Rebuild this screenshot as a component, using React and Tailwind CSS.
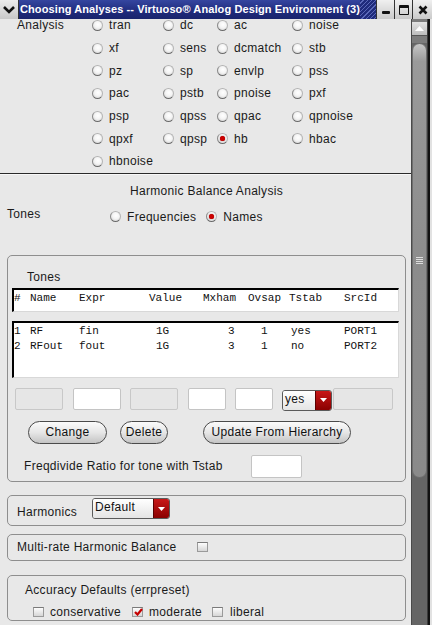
import React from 'react';

const sans = "font-['Liberation_Sans',Arial,sans-serif]";

function Radio({ on }) {
  return (
    <span className="inline-flex w-[11px] h-[11px] shrink-0 items-center justify-center rounded-full border border-[#b4b4b4] border-b-[#6a6a6a] border-l-[#8a8a8a] bg-[radial-gradient(circle_at_55%_40%,#ffffff_0%,#f4f4f4_45%,#c9c9c9_100%)]">
      {on && <span className="w-[5px] h-[5px] rounded-full bg-[#cc0000] shadow-[0_0_1px_#600]" />}
    </span>
  );
}

function Check({ on }) {
  return (
    <span className="relative inline-flex w-[11px] h-[10px] shrink-0 border border-[#9a9a9a] border-t-[#7a7a7a] bg-[linear-gradient(#fdfdfd,#d6d6d6)]">
      {on && (
        <svg className="absolute left-[1px] top-[0px]" width="9" height="8" viewBox="0 0 9 8">
          <path d="M1 4 L3.5 6.5 L8 1" stroke="#c40000" strokeWidth="2.2" fill="none" />
        </svg>
      )}
    </span>
  );
}

function Combo({ label, w, className = '' }) {
  return (
    <div className={`flex h-[21px] rounded-[3px] border border-[#5a5a5a] overflow-hidden ${className}`} style={{ width: w }}>
      <div className="flex-1 bg-[linear-gradient(#ffffff,#e4e4e4)] pl-[2px] text-[12px] leading-[17px] text-[#111]">{label}</div>
      <div className="w-[16px] flex items-center justify-center bg-[linear-gradient(#c81818,#8a0000)] border-l border-[#5a0000]">
        <svg width="7" height="4" viewBox="0 0 7 4"><path d="M0 0 H7 L3.5 4 Z" fill="#fff" /></svg>
      </div>
    </div>
  );
}

function Btn({ children, className = '' }) {
  return (
    <div className={`h-[23px] flex items-center justify-center rounded-full border border-[#4a4a4a] bg-[linear-gradient(#fbfbfb,#e6e6e6_50%,#c4c4c4)] text-[12px] text-[#111] tracking-[0.3px] ${className}`}>
      {children}
    </div>
  );
}

function Field({ white, className = '' }) {
  return (
    <div className={`h-[22px] rounded-[2px] border ${white ? 'bg-white border-[#c4c4c4]' : 'bg-[#e6e6e6] border-[#c8c8c8]'} ${className}`} />
  );
}

const rows = [
  [['tran'], ['dc'], ['ac'], ['noise']],
  [['xf'], ['sens'], ['dcmatch'], ['stb']],
  [['pz'], ['sp'], ['envlp'], ['pss']],
  [['pac'], ['pstb'], ['pnoise'], ['pxf']],
  [['psp'], ['qpss'], ['qpac'], ['qpnoise']],
  [['qpxf'], ['qpsp'], ['hb', true], ['hbac']],
  [['hbnoise']],
];

const colW = ['w-[71px]', 'w-[54px]', 'w-[75px]', 'w-[100px]'];

function TitleBar() {
  return (
    <div className="flex h-[19px] bg-[#1f2b7c]">
      <div className="w-[19px] flex items-center justify-center bg-[linear-gradient(#ececec,#c8c8c8)] border-r border-[#333]">
        <svg width="12" height="8" viewBox="0 0 12 8"><path d="M1 1 L6 6 L11 1" stroke="#111" strokeWidth="2.6" fill="none" /></svg>
      </div>
      <div className="flex-1 flex items-center pl-[1px] bg-[linear-gradient(#3546a0,#1f2b7c_60%,#19246c)] text-white font-bold text-[11px] tracking-[0.1px] whitespace-nowrap overflow-hidden">
        Choosing Analyses -- Virtuoso® Analog Design Environment (3)
      </div>
      <div className="w-[16px] bg-[repeating-linear-gradient(135deg,#1f2b7c_0px,#1f2b7c_2px,#5a68b8_2px,#5a68b8_3px)]" />
      <div className="w-[18px] flex items-end justify-center pb-[5px] bg-[linear-gradient(#f0f0f0,#cacaca)] border-l border-[#333]">
        <div className="w-[8px] h-[3px] bg-[#111] rounded-[1px]" />
      </div>
      <div className="w-[18px] flex items-center justify-center bg-[linear-gradient(#f0f0f0,#cacaca)] border-l border-[#333]">
        <div className="w-[10px] h-[10px] border border-[#111] border-t-[3px] rounded-[1px]" />
      </div>
      <div className="w-[20px] flex items-center justify-center bg-[linear-gradient(#f0f0f0,#cacaca)] border-l border-[#333]">
        <svg width="10" height="10" viewBox="0 0 10 10"><path d="M1.5 1.5 L8.5 8.5 M8.5 1.5 L1.5 8.5" stroke="#111" strokeWidth="2.6" /></svg>
      </div>
    </div>
  );
}

function ScrollBar() {
  return (
    <div className="flex w-[21px] h-[606px]">
      <div className="w-[16px] flex flex-col bg-[#656565] border-l border-[#4a4a4a]">
        <div className="h-[3px] bg-[#7c7c7c]" />
        <div className="h-[14px] flex items-center justify-center bg-[linear-gradient(#e2e2e2,#bdbdbd)] border-b border-[#555]">
          <svg width="9" height="5" viewBox="0 0 9 5"><path d="M0 5 H9 L4.5 0 Z" fill="#fff" /></svg>
        </div>
        <div className="h-[7px] bg-[#7c7c7c]" />
        <div className="h-[435px] flex flex-col items-center justify-center rounded-t-[8px] rounded-b-[8px] border border-[#6e6e6e] bg-[linear-gradient(#c6c6c6,#9a9a9a_4%,#8c8c8c_50%,#8a8a8a)]">
          <div className="flex flex-col gap-[1px]">
            <div className="w-[7px] h-[1px] bg-[#dcdcdc]" />
            <div className="w-[7px] h-[1px] bg-[#dcdcdc]" />
            <div className="w-[7px] h-[1px] bg-[#dcdcdc]" />
            <div className="w-[7px] h-[1px] bg-[#dcdcdc]" />
          </div>
        </div>
      </div>
      <div className="w-[1px] bg-[#3a3a3a]" />
      <div className="w-[2px] bg-[#111]" />
      <div className="w-[2px] bg-[#e2e2e2]" />
    </div>
  );
}

const mono = "font-['Liberation_Mono','Courier_New',monospace] text-[11px] leading-[15px] text-[#111]";
const tcols = 'grid grid-cols-[16px_49px_70px_54px_45px_41px_55px_1fr]';

export default function App() {
  return (
    <div className={`w-[432px] h-[625px] overflow-hidden bg-[#e8e8e8] ${sans} text-[12px] text-[#1a1a1a] tracking-[0.3px]`}>
      <TitleBar />
      <div className="flex h-[606px]">
        <div className="w-[411px] h-[606px] overflow-hidden">
          <div className="mt-[-5px]">
            {rows.map((r, i) => (
              <div key={i} className="flex h-[22.7px] items-center">
                <div className="w-[92px] pl-[17px]">{i === 0 ? 'Analysis' : ''}</div>
                {r.map(([n, on], j) => (
                  <div key={n} className={`flex items-center gap-[6px] ${colW[j]}`}>
                    <Radio on={on} />
                    <span>{n}</span>
                  </div>
                ))}
              </div>
            ))}
          </div>
          <div className="h-[1px] bg-[#2a2a2a]" />
          <div className="h-[1px] bg-[#f8f8f8]" />
          <div className="h-[32px] flex items-center justify-center pl-[2px]">Harmonic Balance Analysis</div>
          <div className="h-[20px] flex items-center">
            <div className="w-[110px] pl-[7px] mt-[-5px]">Tones</div>
            <Radio />
            <span className="ml-[6px] mr-[10px]">Frequencies</span>
            <Radio on />
            <span className="ml-[6px]">Names</span>
          </div>

          <div className="ml-[7px] w-[399px] mt-[28px] rounded-[5px] border border-[#8e8e8e] pb-[3px]">
            <div className="mt-[13px] pl-[19px] h-[16px] leading-[16px]">Tones</div>
            <div className="ml-[4px] mt-[3px] w-[387px] h-[24px] bg-white border-t-2 border-l-2 border-[#000] border-r border-r-[#d8d8d8] border-b border-b-[#d8d8d8] pt-[1px] tracking-normal">
              <div className={`${tcols} ${mono}`}>
                <span>#</span><span>Name</span><span>Expr</span><span>Value</span><span>Mxham</span><span>Ovsap</span><span>Tstab</span><span>SrcId</span>
              </div>
            </div>
            <div className="ml-[4px] mt-[9px] w-[387px] h-[57px] bg-white border-t-2 border-l-2 border-[#000] border-r border-r-[#d8d8d8] border-b border-b-[#d8d8d8] pt-[1px] tracking-normal">
              {[
                ['1', 'RF', 'fin', '1G', '3', '1', 'yes', 'PORT1'],
                ['2', 'RFout', 'fout', '1G', '3', '1', 'no', 'PORT2'],
              ].map((r) => (
                <div key={r[0]} className={`${tcols} ${mono}`}>
                  <span>{r[0]}</span><span>{r[1]}</span><span>{r[2]}</span>
                  <span className="pl-[7px]">{r[3]}</span>
                  <span className="pl-[25px]">{r[4]}</span>
                  <span className="pl-[13px]">{r[5]}</span>
                  <span className="pl-[2px]">{r[6]}</span>
                  <span>{r[7]}</span>
                </div>
              ))}
            </div>
            <div className="mt-[10px] flex items-start">
              <Field className="ml-[7px] w-[48px]" />
              <Field white className="ml-[10px] w-[48px]" />
              <Field className="ml-[9px] w-[48px]" />
              <Field white className="ml-[10px] w-[38px]" />
              <Field white className="ml-[9px] w-[38px]" />
              <Combo label="yes" w={50} className="ml-[9px] mt-[2px]" />
              <Field className="ml-[1px] w-[60px]" />
            </div>
            <div className="mt-[10px] flex">
              <Btn className="ml-[20px] w-[79px]">Change</Btn>
              <Btn className="ml-[13px] w-[48px]">Delete</Btn>
              <Btn className="ml-[35px] w-[148px]">Update From Hierarchy</Btn>
            </div>
            <div className="mt-[11px] flex items-center h-[23px]">
              <span className="pl-[16px] w-[243px]">Freqdivide Ratio for tone with Tstab</span>
              <Field white className="w-[51px] h-[23px]" />
            </div>
          </div>

          <div className="ml-[7px] w-[399px] mt-[13px] h-[31px] rounded-[5px] border border-[#8e8e8e] flex items-center">
            <span className="pl-[9px] w-[84px] mt-[3px]">Harmonics</span>
            <Combo label="Default" w={78} className="mt-[-3px]" />
          </div>

          <div className="ml-[7px] w-[399px] mt-[8px] h-[27px] rounded-[5px] border border-[#8e8e8e] flex items-center">
            <span className="pl-[9px] w-[189px]">Multi-rate Harmonic Balance</span>
            <Check />
          </div>

          <div className="ml-[7px] w-[399px] mt-[14px] h-[46px] rounded-[5px] border border-[#8e8e8e]">
            <div className="mt-[6px] pl-[17px] h-[16px] leading-[16px]">Accuracy Defaults (errpreset)</div>
            <div className="mt-[5px] flex items-center pl-[25px]">
              <Check />
              <span className="ml-[6px] mr-[11px]">conservative</span>
              <Check on />
              <span className="ml-[6px] mr-[10px]">moderate</span>
              <Check />
              <span className="ml-[7px]">liberal</span>
            </div>
          </div>
        </div>
        <ScrollBar />
      </div>
    </div>
  );
}
